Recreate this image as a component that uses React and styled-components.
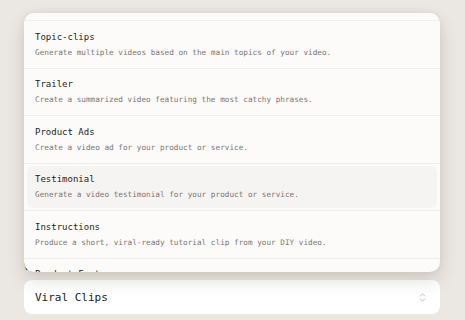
import styled, { createGlobalStyle } from "styled-components";
import { ChevronsUpDown } from "lucide-react";

const GlobalStyle = createGlobalStyle`
  body {
    margin: 0;
    background: #ebe7e2;
    font-family: "DejaVu Sans Mono", "Liberation Mono", monospace;
  }
`;

const options = [
  { title: "Viral Clips", desc: "Find the most viral moments of your video." },
  { title: "Topic-clips", desc: "Generate multiple videos based on the main topics of your video." },
  { title: "Trailer", desc: "Create a summarized video featuring the most catchy phrases." },
  { title: "Product Ads", desc: "Create a video ad for your product or service." },
  { title: "Testimonial", desc: "Generate a video testimonial for your product or service.", active: true },
  { title: "Instructions", desc: "Produce a short, viral-ready tutorial clip from your DIY video." },
  { title: "Product Features", desc: "Highlight the key features of your product." },
];

function App() {
  return (
    <>
      <GlobalStyle />
      <Page>
        <Label>Video type</Label>
        <SelectRoot>
          <Popover>
            <List>
              {options.slice(1).map((o) => (
                <Item key={o.title}>
                  <Option $active={o.active}>
                    <Title>{o.title}</Title>
                    <Desc>{o.desc}</Desc>
                  </Option>
                </Item>
              ))}
            </List>
          </Popover>
          <Trigger>
            <span>Viral Clips</span>
            <ChevronsUpDown size={11} strokeWidth={1.5} color="#a9a5a1" />
          </Trigger>
        </SelectRoot>
      </Page>
    </>
  );
}

export default App;

const Page = styled.div`
  min-height: 100vh;
  box-sizing: border-box;
  display: flex;
  flex-direction: column;
  justify-content: flex-end;
  gap: 8px;
  padding: 0 25px 6px 24px;
`;

const Label = styled.div`
  font-size: 9px;
  line-height: 10px;
  color: #2a2724;
`;

const SelectRoot = styled.div`
  position: relative;
`;

const Popover = styled.div`
  position: absolute;
  left: 0;
  right: 0;
  bottom: calc(100% + 8px);
  height: 259px;
  background: #fdfbfa;
  border-radius: 10px;
  box-shadow: 0 8px 18px rgba(60, 50, 40, 0.16), 0 0 6px rgba(60, 50, 40, 0.05);
  overflow: hidden;
  padding-top: 7px;
  box-sizing: border-box;
`;

const List = styled.div`
  display: flex;
  flex-direction: column;
`;

const Item = styled.div`
  border-top: 1px solid #f1edea;
  padding: 2px 3px;
`;

const Option = styled.div`
  padding: 7.5px 8px 8.1px;
  border-radius: 6px;
  background: ${(p) => (p.$active ? "#f6f4f2" : "transparent")};
  display: flex;
  flex-direction: column;
  gap: 4px;
`;

const Title = styled.div`
  font-size: 9px;
  line-height: 12px;
  color: #1f1d1b;
`;

const Desc = styled.div`
  font-size: 7.7px;
  line-height: 11px;
  color: #7a7672;
  white-space: nowrap;
`;

const Trigger = styled.div`
  height: 34px;
  box-sizing: border-box;
  background: #ffffff;
  border-radius: 8px;
  display: flex;
  align-items: center;
  justify-content: space-between;
  padding: 0 12px 0 11px;
  font-size: 11px;
  color: #222;
`;
